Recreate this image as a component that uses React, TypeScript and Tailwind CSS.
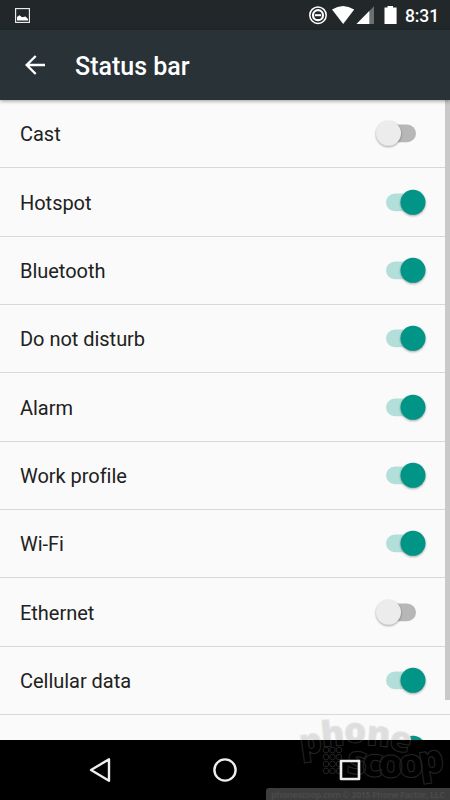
import { useState } from 'react';

const initialItems = [
  { label: 'Cast', on: false },
  { label: 'Hotspot', on: true },
  { label: 'Bluetooth', on: true },
  { label: 'Do not disturb', on: true },
  { label: 'Alarm', on: true },
  { label: 'Work profile', on: true },
  { label: 'Wi-Fi', on: true },
  { label: 'Ethernet', on: false },
  { label: 'Cellular data', on: true },
  { label: '', on: true },
];

const Toggle = ({ on, label, onClick }: { on: boolean; label: string; onClick: () => void }) => (
  <button role="switch" aria-checked={on} aria-label={label} onClick={onClick} className="h-[34px] w-[58px] shrink-0">
    <svg width="58" height="34" viewBox="0 0 58 34" className="overflow-visible">
      <rect x="14" y="7.6" width="30" height="17.6" rx="8.8" fill={on ? '#b3dfda' : '#b7b7b7'} />
      <circle
        cx={on ? 41 : 16.5}
        cy="16.3"
        r="12.5"
        fill={on ? '#009587' : '#ececec'}
        className="drop-shadow-[0_1px_1px_rgba(0,0,0,0.35)]"
      />
    </svg>
  </button>
);

const StatusIcons = () => (
  <svg width="92" height="30" viewBox="308 0 92 30" fill="#fff">
    <circle cx="318" cy="15.2" r="8.2" fill="none" stroke="#fff" strokeWidth="1.5" />
    <circle cx="318" cy="15.2" r="5" fill="none" stroke="#fff" strokeWidth="2.2" />
    <rect x="315" y="14.2" width="6" height="2" />
    <path d="M332 9.5Q343 2.3 354.2 9.5L343.2 24Z" />
    <path d="M374 6.2V24H356.5Z" fill="#6a6f71" />
    <path d="M369.3 11V24H356.5Z" />
    <path d="M387.5 6H393V7.6H396.6V24H384.5V7.6H387.5Z" />
  </svg>
);

// The mark is filled over the list and only outlined over the black nav bar
const Watermark = () => (
  <svg
    width="190"
    height="100"
    viewBox="260 700 190 100"
    className="absolute bottom-0 right-0 pointer-events-none font-['Open_Sans',sans-serif] font-extrabold"
  >
    <defs>
      <linearGradient id="markFill" gradientUnits="userSpaceOnUse" x1="0" y1="700" x2="0" y2="800">
        <stop offset="0.4" stopColor="#dedede" />
        <stop offset="0.4" stopColor="#000" stopOpacity="0" />
      </linearGradient>
      <linearGradient id="markStroke" gradientUnits="userSpaceOnUse" x1="0" y1="700" x2="0" y2="800">
        <stop offset="0.4" stopColor="#e4e4e4" />
        <stop offset="0.4" stopColor="#242424" />
      </linearGradient>
    </defs>
    <g fill="url(#markFill)" stroke="url(#markStroke)" strokeWidth="1">
      <text fontSize="35" x="301 322 344 366 388" y="755 747 743 745 749" rotate="-8 -5 0 5 12">phone</text>
      <text fontSize="40" x="346 361 378 399 420" y="773 776 778 778 775" rotate="5 3 0 -4 -8">scoop</text>
    </g>
    <g fill="none" stroke="#242424">
      {[0, 1, 2, 3].map((row) =>
        [0, 1, 2].map((col) => <circle key={`${row}-${col}`} cx={326 + col * 6.5} cy={750 + row * 7} r="2.8" />)
      )}
    </g>
    <path d="M266 800V791Q266 788 269 788H450V800Z" fill="#3d3d3d" />
    <text x="271" y="798" fontSize="9" textLength="174" fill="#4a4a4a" className="font-bold">
      phonescoop.com  © 2015 Phone Factor, LLC
    </text>
  </svg>
);

export default function App() {
  const [items, setItems] = useState(initialItems);

  const toggle = (index: number) =>
    setItems(items.map((item, i) => (i === index ? { ...item, on: !item.on } : item)));

  return (
    <div className="relative flex h-[800px] w-[450px] flex-col overflow-hidden bg-[#fafafa] font-[Roboto,sans-serif]">
      <div className="flex h-[30px] shrink-0 items-center bg-[#22272a] pl-[15px]">
        <svg width="15" height="15" viewBox="0 0 15 15">
          <rect x="0.6" y="0.6" width="13.8" height="13.8" fill="none" stroke="#f4f4f4" strokeWidth="1.1" />
          <path d="M2 12.5V9L4.5 7.2L7 9.2L10.5 8.5L13 11V12.5Z" fill="#fff" />
        </svg>
        <div className="ml-auto flex items-center">
          <StatusIcons />
          <span className="w-[50px] pl-[5px] pt-px text-[17.5px] font-medium leading-[30px] tracking-[-0.1px] text-white">
            8:31
          </span>
        </div>
      </div>

      <header className="z-10 flex h-[70px] shrink-0 items-center bg-[#283237] pl-[25px] shadow-[0_1px_4px_rgba(0,0,0,0.4)]">
        <svg width="20" height="20" viewBox="0 0 20 20" fill="none" stroke="#fff" strokeWidth="2.4">
          <path d="M20 10H2M10.7 1L1.7 10L10.7 19" />
        </svg>
        <h1 className="ml-[30px] pt-[3px] text-[25px] font-medium leading-8 text-white">Status bar</h1>
      </header>

      <main className="relative h-[640px] shrink-0 overflow-hidden">
        {items.map((item, index) => (
          <div
            key={index}
            className="flex h-[68.35px] items-center justify-between border-b border-[#d8d8d8] pl-5 pr-5 pt-px"
          >
            <span className="text-[20px] leading-6 tracking-[-0.03px] text-[#212121]">{item.label}</span>
            <Toggle on={item.on} label={item.label} onClick={() => toggle(index)} />
          </div>
        ))}
        <div className="absolute right-0 top-0 h-[600px] w-[5px] bg-[#c9c9c9]" />
      </main>

      <nav className="flex h-[60px] shrink-0 items-center bg-black pl-[89px]">
        <svg
          width="272"
          height="26"
          viewBox="89 757 272 26"
          fill="none"
          stroke="#eee"
          strokeWidth="2.4"
          strokeLinejoin="round"
          className="relative z-10"
        >
          <path d="M109 759.3V780.7L91 770Z" />
          <circle cx="225" cy="770" r="10.6" />
          <rect x="341" y="761" width="18" height="18" strokeWidth="2.6" />
        </svg>
      </nav>
      <Watermark />
    </div>
  );
}
